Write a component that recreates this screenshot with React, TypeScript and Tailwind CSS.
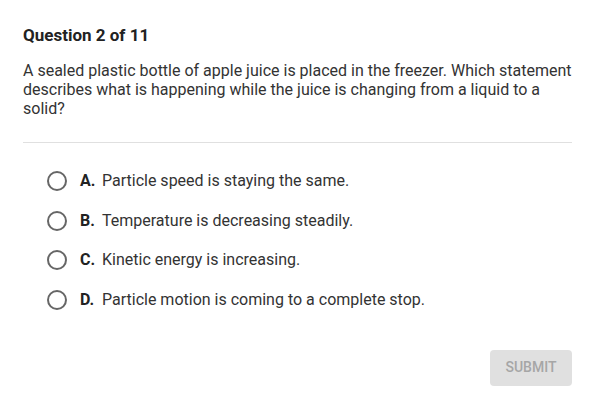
const options = [
  { letter: "A.", text: "Particle speed is staying the same." },
  { letter: "B.", text: "Temperature is decreasing steadily." },
  { letter: "C.", text: "Kinetic energy is increasing." },
  { letter: "D.", text: "Particle motion is coming to a complete stop." },
];

export default function App() {
  return (
    <div className="h-[405px] w-[609px] bg-white font-['Roboto',sans-serif] text-[#333]">
      <div className="flex flex-col px-[23px] pr-[37px] pt-[25px]">
        <h2 className="text-[17px] font-bold leading-[20px] text-[#222]">Question 2 of 11</h2>
        <p className="mt-[16px] text-[16px] leading-[19px]">
          A sealed plastic bottle of apple juice is placed in the freezer. Which statement
          describes what is happening while the juice is changing from a liquid to a solid?
        </p>
        <div className="mt-[24px] h-px bg-[#e0e0e0]" />
        <div className="mt-[28px] flex flex-col gap-[19.5px] pl-[24px]">
          {options.map((o) => (
            <label key={o.letter} className="flex h-[20px] items-center">
              <span className="h-[20px] w-[20px] rounded-full border-2 border-[#666]" />
              <span className="ml-[13px] w-[22px] text-[16px] font-bold text-[#222]">{o.letter}</span>
              <span className="text-[16px]">{o.text}</span>
            </label>
          ))}
        </div>
        <div className="mt-[40px] flex justify-end">
          <button className="h-[36px] w-[82px] rounded-[4px] bg-[#e0e0e0] text-[14px] font-medium text-[#a6a6a6]">
            SUBMIT
          </button>
        </div>
      </div>
    </div>
  );
}
